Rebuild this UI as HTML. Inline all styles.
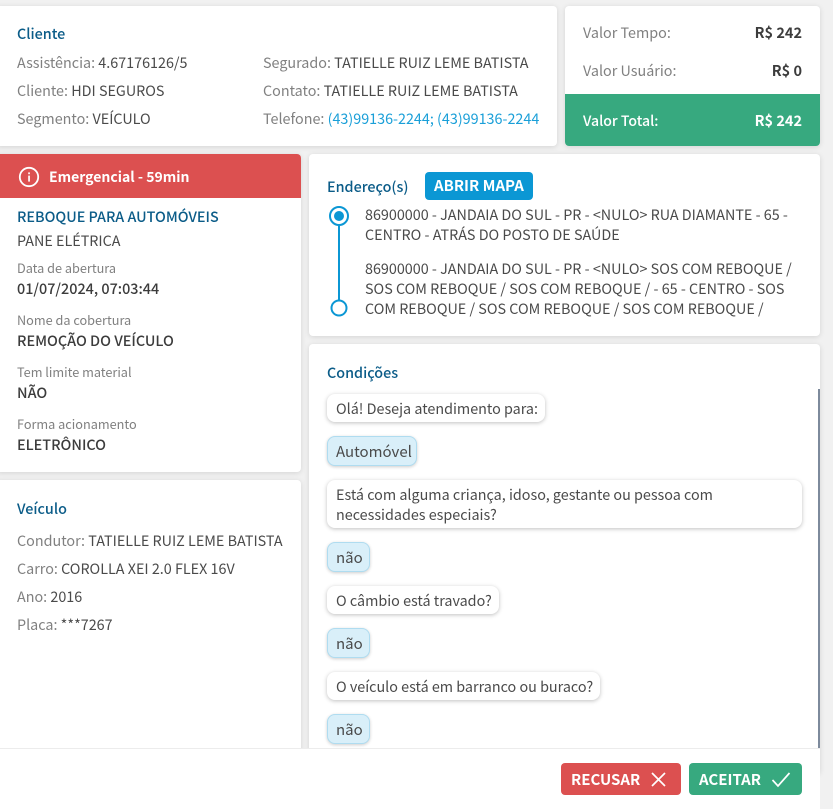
<!DOCTYPE html>
<html><head><meta charset="utf-8"><style>
html,body{margin:0;padding:0;width:833px;height:809px;overflow:hidden;background:#f1f1f1}
body{position:relative;font-family:"Noto Sans CJK JP","Liberation Sans",sans-serif;font-size:14.35px;color:#4a4a4a}
.c{position:absolute;background:#fff;border-radius:4px;box-shadow:0 1px 6px rgba(0,0,0,.12)}
.t{position:absolute;white-space:nowrap;line-height:20px;height:20px}
.g{color:#808080}
.h{color:#0b5c88;font-weight:500}
.l{font-size:12.7px;color:#808080}
.b{font-weight:500;color:#3c3c3c;font-size:14.4px}
.q,.a{position:absolute;box-sizing:border-box;border-radius:8px;white-space:nowrap;line-height:20px}
.q{background:#fff;box-shadow:0 1px 4px rgba(0,0,0,.25);padding:5px 9px 0}
.a{background:#d9eff9;border:1px solid #afdcf0;box-shadow:0 1px 3px rgba(0,0,0,.2);padding:5px 8px 0;height:30px;font-size:15px}
.btn{position:absolute;border-radius:4px;color:#fff;font-weight:700;line-height:20px;box-sizing:border-box;font-size:15px}
</style></head><body>

<div class="c" style="left:-4px;top:6px;width:561px;height:140px"></div>
<div class="t h" style="left:17px;top:24px">Cliente</div>
<div class="t" style="left:17px;top:53px"><span class="g">Assistência:</span> 4.67176126/5</div>
<div class="t" style="left:17px;top:81px"><span class="g">Cliente:</span> HDI SEGUROS</div>
<div class="t" style="left:17px;top:109px"><span class="g">Segmento:</span> VEÍCULO</div>
<div class="t" style="left:263px;top:53px"><span class="g">Segurado:</span> TATIELLE RUIZ LEME BATISTA</div>
<div class="t" style="left:263px;top:81px"><span class="g">Contato:</span> TATIELLE RUIZ LEME BATISTA</div>
<div class="t" style="left:263px;top:109px"><span class="g">Telefone:</span> <span style="color:#1a9fd8">(43)99136-2244; (43)99136-2244</span></div>

<div class="c" style="left:565px;top:6px;width:255px;height:140px;overflow:hidden">
<div style="position:absolute;left:0;top:88px;width:255px;height:52px;background:#37a97f"></div>
</div>
<div class="t g" style="left:583px;top:23px">Valor Tempo:</div>
<div class="t b" style="right:31px;top:23px;font-size:14.5px;font-weight:700">R$ 242</div>
<div class="t g" style="left:583px;top:61px">Valor Usuário:</div>
<div class="t b" style="right:31px;top:61px;font-size:14.5px;font-weight:700">R$ 0</div>
<div class="t" style="left:583px;top:111px;color:#fff;font-weight:500;font-size:14.1px">Valor Total:</div>
<div class="t" style="right:31px;top:111px;color:#fff;font-weight:700;font-size:14.5px">R$ 242</div>

<div class="c" style="left:-4px;top:154px;width:305px;height:318px;overflow:hidden">
<div style="position:absolute;left:0;top:0;width:305px;height:44px;background:#dc5050"></div>
</div>
<svg style="position:absolute;left:18px;top:166px" width="22" height="22" viewBox="0 0 22 22" fill="none"><circle cx="11" cy="11" r="9.2" stroke="#fff" stroke-width="1.8"/><rect x="10.2" y="9.6" width="1.7" height="6" fill="#fff"/><rect x="10.2" y="6.4" width="1.7" height="1.8" fill="#fff"/></svg>
<div class="t" style="left:49px;top:167px;color:#fff;font-weight:700;font-size:14px">Emergencial - 59min</div>
<div class="t h" style="left:17px;top:207px">REBOQUE PARA AUTOMÓVEIS</div>
<div class="t" style="left:17px;top:231px">PANE ELÉTRICA</div>
<div class="t l" style="left:17px;top:258px">Data de abertura</div>
<div class="t b" style="left:17px;top:279px">01/07/2024, 07:03:44</div>
<div class="t l" style="left:17px;top:310px">Nome da cobertura</div>
<div class="t b" style="left:17px;top:331px">REMOÇÃO DO VEÍCULO</div>
<div class="t l" style="left:17px;top:362px">Tem limite material</div>
<div class="t b" style="left:17px;top:383px">NÃO</div>
<div class="t l" style="left:17px;top:414px">Forma acionamento</div>
<div class="t b" style="left:17px;top:435px">ELETRÔNICO</div>

<div class="c" style="left:-4px;top:480px;width:305px;height:300px"></div>
<div class="t h" style="left:17px;top:499px">Veículo</div>
<div class="t" style="left:17px;top:531px"><span class="g">Condutor:</span> TATIELLE RUIZ LEME BATISTA</div>
<div class="t" style="left:17px;top:559px"><span class="g">Carro:</span> COROLLA XEI 2.0 FLEX 16V</div>
<div class="t" style="left:17px;top:587px"><span class="g">Ano:</span> 2016</div>
<div class="t" style="left:17px;top:615px"><span class="g">Placa:</span> ***7267</div>

<div class="c" style="left:309px;top:154px;width:511px;height:182px"></div>
<div class="t h" style="left:327px;top:177px">Endereço(s)</div>
<div class="btn" style="left:425px;top:172px;width:108px;height:28px;background:#0b97d4;padding:4px 9px">ABRIR MAPA</div>
<svg style="position:absolute;left:327px;top:204px" width="24" height="116" viewBox="0 0 24 116" fill="none"><line x1="12" y1="21" x2="12" y2="96" stroke="#0b97d4" stroke-width="2"/><circle cx="12" cy="12" r="9" stroke="#0b97d4" stroke-width="2"/><circle cx="12" cy="12" r="5" fill="#0b97d4"/><circle cx="12" cy="104" r="7.5" stroke="#0b97d4" stroke-width="2"/></svg>
<div class="t" style="left:365px;top:205px">86900000 - JANDAIA DO SUL - PR - &lt;NULO&gt; RUA DIAMANTE - 65 -</div>
<div class="t" style="left:365px;top:225px">CENTRO - ATRÁS DO POSTO DE SAÚDE</div>
<div class="t" style="left:365px;top:259px">86900000 - JANDAIA DO SUL - PR - &lt;NULO&gt; SOS COM REBOQUE /</div>
<div class="t" style="left:365px;top:279px">SOS COM REBOQUE / SOS COM REBOQUE / - 65 - CENTRO - SOS</div>
<div class="t" style="left:365px;top:299px">COM REBOQUE / SOS COM REBOQUE / SOS COM REBOQUE /</div>

<div class="c" style="left:309px;top:344px;width:511px;height:430px"></div>
<div style="position:absolute;left:818px;top:389px;width:2px;height:360px;background:#7d8a9c"></div>
<div class="t h" style="left:327px;top:363px">Condições</div>
<div class="q" style="left:327px;top:394px;width:218px;height:28px">Olá! Deseja atendimento para:</div>
<div class="a" style="left:327px;top:436px;width:90px">Automóvel</div>
<div class="q" style="left:327px;top:480px;width:475px;height:48px">Está com alguma criança, idoso, gestante ou pessoa com<br>necessidades especiais?</div>
<div class="a" style="left:327px;top:542px;width:43px">não</div>
<div class="q" style="left:327px;top:586px;width:172px;height:28px">O câmbio está travado?</div>
<div class="a" style="left:327px;top:628px;width:43px">não</div>
<div class="q" style="left:327px;top:672px;width:273px;height:28px">O veículo está em barranco ou buraco?</div>
<div class="a" style="left:327px;top:714px;width:43px">não</div>

<div style="position:absolute;left:0;top:748px;width:820px;height:61px;background:#fff;border-top:1px solid #ececec;box-sizing:border-box"></div>
<div class="btn" style="left:561px;top:763px;width:120px;height:32px;background:#dc5050;padding:7px 10px 0">RECUSAR</div>
<svg style="position:absolute;left:650px;top:771px" width="17" height="17" viewBox="0 0 17 17" fill="none"><path d="M2 2 L15 15 M15 2 L2 15" stroke="#fff" stroke-width="1.7"/></svg>
<div class="btn" style="left:689px;top:763px;width:113px;height:32px;background:#37a97f;padding:7px 10px 0">ACEITAR</div>
<svg style="position:absolute;left:771px;top:771px" width="20" height="17" viewBox="0 0 20 17" fill="none"><path d="M1.5 9 L7 15 L18.5 2" stroke="#fff" stroke-width="1.7"/></svg>
</body></html>
